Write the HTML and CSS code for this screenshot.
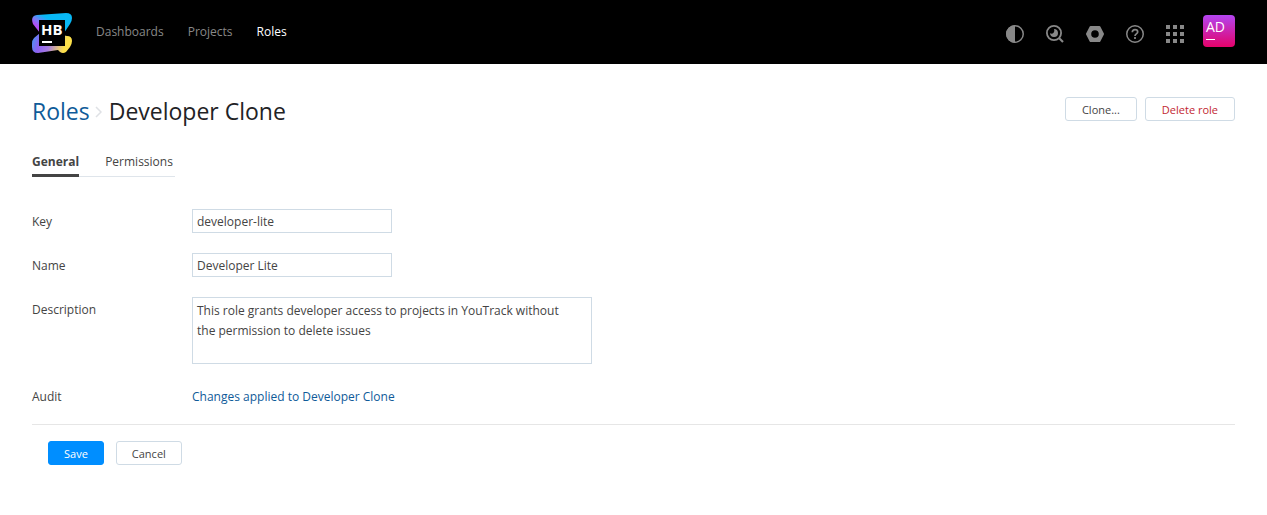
FILE: index.html
```
<!DOCTYPE html>
<html lang="en">
<head>
<meta charset="utf-8">
<meta name="viewport" content="width=device-width, initial-scale=1">
<title>Developer Clone - Roles</title>
<link rel="stylesheet" href="styles.css">
</head>
<body>
<header class="header">
  <a class="logo" href="#" aria-label="Hub">
    <svg width="40" height="40" viewBox="0 0 40 40">
      <defs>
        <linearGradient id="ribbon" x1="0" y1="0.5" x2="0.5" y2="0.1">
          <stop offset="0" stop-color="#b14df5"/><stop offset="0.3" stop-color="#7a7cf7"/><stop offset="0.7" stop-color="#08b8f5"/>
        </linearGradient>
        <linearGradient id="base" x1="0" y1="0" x2="1" y2="0.15">
          <stop offset="0" stop-color="#3f9df5"/><stop offset="0.25" stop-color="#8c60f2"/><stop offset="0.5" stop-color="#a57ae0"/><stop offset="0.75" stop-color="#e0c080"/><stop offset="0.9" stop-color="#fce04a"/>
        </linearGradient>
      </defs>
      <path fill="url(#base)" d="M8 20 2 25Q0 27 0 31v3q0 6 6 6l20-3 2 2q3 2 6 0l4-5q2-3 2-6 0-5-5-5L20 20z"/>
      <path fill="url(#ribbon)" d="M5 2 34 0q6 0 6 5 0 3-2 6l-6 9H8L1 11Q-2 3 5 2z"/>
      <path fill="#000" d="M7 7h26v26H7z"/>
      <text class="logo-text" x="9" y="22">HB</text>
      <path fill="#fff" d="M10 28h10v2H10z"/>
    </svg>
  </a>
  <nav class="nav">
    <a href="#">Dashboards</a>
    <a href="#">Projects</a>
    <a class="current" href="#" aria-current="page">Roles</a>
  </nav>
  <div class="tray">
    <button class="icon" aria-label="Theme"><svg width="20" height="20" viewBox="0 0 20 20"><circle cx="10" cy="10" r="8.25" fill="none" stroke="currentColor" stroke-width="1.5"/><path fill="currentColor" d="M10 1a9 9 0 0 0 0 18z"/></svg></button>
    <button class="icon" aria-label="Search"><svg width="20" height="20" viewBox="0 0 20 20"><circle cx="9" cy="9" r="7.1" fill="none" stroke="currentColor" stroke-width="1.8"/><path d="m14 14 4 4" stroke="currentColor" stroke-width="2.2"/><path fill="currentColor" d="M9 5a4 4 0 1 1-4 4.300q2.200.9 3.600-.5T9 5z"/></svg></button>
    <button class="icon" aria-label="Administration"><svg width="20" height="20" viewBox="0 0 20 20"><path fill="currentColor" fill-rule="evenodd" d="M5.500 2h9q.5 0 .8.500l3.600 7q.2.500 0 1l-3.600 7q-.3.500-.8.500h-9q-.5 0-.8-.5l-3.600-7q-.2-.5 0-1l3.600-7q.3-.5.800-.5zM10 6.200a3.800 3.800 0 1 0 0 7.600 3.800 3.800 0 0 0 0-7.600z"/></svg></button>
    <button class="icon" aria-label="Help"><svg width="20" height="20" viewBox="0 0 20 20" fill="none" stroke="currentColor" stroke-width="1.5"><circle cx="10" cy="10" r="8.25"/><path stroke-width="1.7" d="M7.300 8.200Q7.300 5.700 10 5.700t2.700 2.300c0 2-2.700 1.800-2.700 3.900M10 13v2"/></svg></button>
    <button class="icon" aria-label="Services"><svg width="20" height="20" viewBox="0 0 20 20" fill="currentColor"><path d="M1 1h4v4H1zM8 1h4v4H8zM15 1h4v4h-4zM1 8h4v4H1zM8 8h4v4H8zM15 8h4v4h-4zM1 15h4v4H1zM8 15h4v4H8zM15 15h4v4h-4z"/></svg></button>
    <button class="avatar" aria-label="Profile">AD</button>
  </div>
</header>
<main class="page">
  <div class="heading">
    <h1 class="title"><a href="#">Roles</a><svg class="chevron" width="7" height="12" viewBox="0 0 7 12" fill="none" stroke="#dfe1e5" stroke-width="1.5"><path d="m1 1 5 5-5 5"/></svg>Developer Clone</h1>
    <div class="actions">
      <button class="button">Clone...</button>
      <button class="button danger">Delete role</button>
    </div>
  </div>
  <nav class="tabs">
    <a class="tab selected" href="#" aria-current="page">General</a>
    <a class="tab" href="#">Permissions</a>
  </nav>
  <form class="form">
    <div class="row"><label for="key">Key</label><input class="input" id="key" type="text" value="developer-lite"></div>
    <div class="row"><label for="name">Name</label><input class="input" id="name" type="text" value="Developer Lite"></div>
    <div class="row"><label for="description">Description</label><textarea class="input area" id="description">This role grants developer access to projects in YouTrack without the permission to delete issues</textarea></div>
    <div class="row"><span class="label">Audit</span><a class="audit" href="#">Changes applied to Developer Clone</a></div>
    <div class="footer">
      <button class="button primary" type="button">Save</button>
      <button class="button" type="button">Cancel</button>
    </div>
  </form>
</main>
</body>
</html>
```
FILE: styles.css
```
* { box-sizing: border-box; }
body {
  margin: 0;
  background: #fff;
  color: #444;
  font: 12px/20px "Open Sans", "Noto Sans", sans-serif;
}
a { color: #0f5b99; text-decoration: none; }
button, input, textarea { font: inherit; color: inherit; }
button { cursor: pointer; }
.header {
  display: flex;
  align-items: center;
  height: 64px;
  padding: 0 32px;
  background: #000;
}
.logo { display: flex; margin-right: 24px; padding-top: 2px; }
.logo-text { fill: #fff; font: bold 15px "Open Sans", sans-serif; }
.nav { display: flex; gap: 24px; }
.nav a { color: #888; }
.nav a.current { color: #fff; }
.tray { display: flex; align-items: center; gap: 20px; margin-left: auto; }
.icon {
  display: flex;
  padding: 4px 0 0;
  border: 0;
  background: none;
  color: #888;
}
.avatar {
  display: flex;
  flex-direction: column;
  align-items: flex-start;
  width: 32px;
  height: 32px;
  margin: 0 0 2px -2px;
  padding: 3px;
  border: 0;
  border-radius: 4px;
  background: linear-gradient(#b345f1, #e5026a);
  color: #fff;
  font-size: 14px;
  line-height: 18px;
}
.avatar::after { content: ""; width: 9px; height: 1px; margin-top: 3px; background: #fff; }
.page { padding: 31px 32px; }
.heading { display: flex; justify-content: space-between; align-items: flex-start; }
.title {
  display: flex;
  align-items: center;
  margin: 0;
  color: #1f2326;
  font-size: 23px;
  font-weight: 400;
  line-height: 32px;
}
.chevron { margin: 2px 7px 0 5px; }
.actions { display: flex; gap: 8px; padding-top: 2px; }
.button {
  height: 24px;
  padding: 2px 15px 0;
  border: 1px solid #cfdbe5;
  border-radius: 3px;
  background: #fff;
  font-size: 11px;
  line-height: 20px;
}
.actions .button { padding: 2px 16px 0; }
.danger { color: #c22731; }
.primary { border-color: #008eff; background: #008eff; color: #fff; }
.tabs { display: flex; gap: 24px; width: fit-content; margin-top: 21px; box-shadow: inset 0 -1px #dfe5eb; }
.tab { padding: 4px 2px 2px; border-bottom: 3px solid transparent; color: #444; }
.selected { padding: 4px 0 2px; border-color: #444; font-weight: 700; }
.form { margin-top: 32px; }
.row { display: grid; grid-template-columns: 160px 1fr; align-items: start; margin-bottom: 20px; }
.row label, .label, .audit { padding-top: 3px; }
.input {
  width: 200px;
  height: 24px;
  padding: 1px 4px;
  border: 1px solid #cfdbe5;
  border-radius: 0;
  background: #fff;
  outline: 0;
}
.area { display: block; width: 400px; height: 67px; padding: 3px 20px 3px 4px; resize: none; overflow: hidden; }
.footer { display: flex; gap: 12px; margin-top: -3px; padding: 16px; border-top: 1px solid #e6e6e6; }
```
